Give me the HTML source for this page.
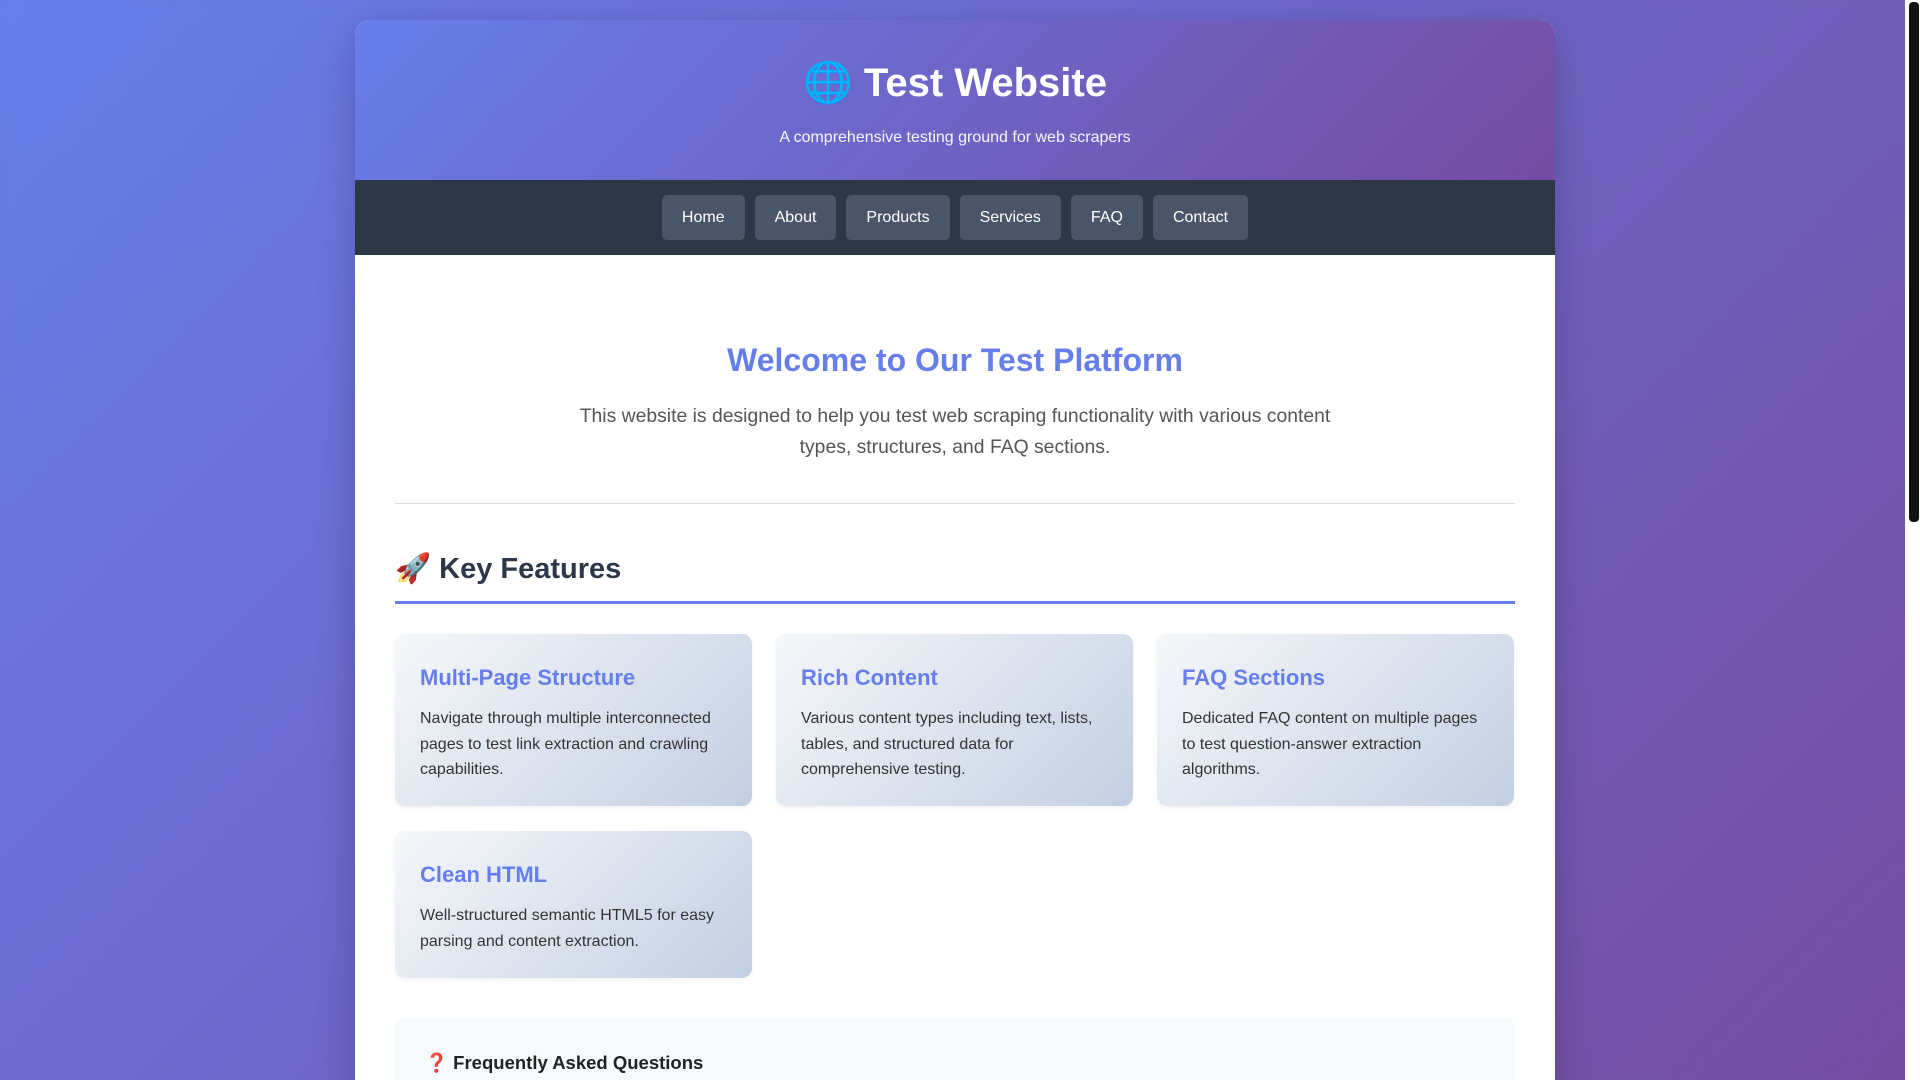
<!DOCTYPE html>
<html><head><meta charset="utf-8"><style>
*{box-sizing:border-box;margin:0;padding:0}
html,body{width:1920px;height:1080px;overflow:hidden}
body{font-family:"Liberation Sans","Noto Sans CJK SC",sans-serif;background:linear-gradient(135deg,#667eea 0%,#764ba2 100%);color:#333;position:relative}
.sb{position:absolute;right:0;top:0;width:15px;height:1080px;background:#fff}
.sb div{position:absolute;left:4px;right:1px;top:2px;height:520px;background:#111;border-radius:4px}
.wrap{position:absolute;left:355px;top:20px;width:1200px;height:1100px;background:#fff;border-radius:15px 15px 0 0;overflow:hidden;box-shadow:0 10px 40px rgba(0,0,0,.2)}
header{height:160px;background:linear-gradient(135deg,#667eea 0%,#764ba2 100%);color:#fff;text-align:center;padding-top:39px}
header h1{font-size:40px;font-weight:bold;line-height:48px}
header p{font-size:16px;margin-top:22px;opacity:.95}
nav{height:75px;background:#2d3748;display:flex;justify-content:center;gap:10px;padding-top:15px}
nav a{display:block;height:45px;line-height:45px;padding:0 20px;background:#4a5568;color:#fff;font-size:16px;border-radius:5px;text-decoration:none}
main{padding:0 40px}
.hero{text-align:center;padding-top:85px}
.hero h2{color:#667eea;font-size:32px;line-height:40px}
.hero p{font-size:19.35px;color:#555;line-height:31px;width:780px;margin:21px auto 0}
hr{border:0;border-top:1px solid #ddd;margin-top:40px}
h3.kf{font-size:29px;color:#2d3748;margin-top:46px;padding-bottom:13px;border-bottom:3px solid #667eea;line-height:38px}
.grid{display:grid;grid-template-columns:repeat(3,357px);grid-template-rows:172px 147px;gap:25px 24px;margin-top:30px}
.card{background:linear-gradient(135deg,#f5f7fa 0%,#c3cfe2 100%);border-radius:10px;padding:30px 25px 0;box-shadow:0 2px 6px rgba(0,0,0,.05);overflow:hidden}
.card h4{color:#667eea;font-size:22px;line-height:28px}
.card p{font-size:16px;line-height:25.6px;color:#333;margin-top:14px}
.faq{margin-top:40px;background:#f7fafc;border-radius:10px;height:200px;padding:34px 30px}
.faq h3{font-size:18.5px;color:#222}
</style></head><body>
<div class="sb"><div></div></div>
<div class="wrap">
<header><h1>🌐 Test Website</h1><p>A comprehensive testing ground for web scrapers</p></header>
<nav><a>Home</a><a>About</a><a>Products</a><a>Services</a><a>FAQ</a><a>Contact</a></nav>
<main>
<div class="hero"><h2>Welcome to Our Test Platform</h2><p>This website is designed to help you test web scraping functionality with various content types, structures, and FAQ sections.</p></div>
<hr>
<h3 class="kf">🚀 Key Features</h3>
<div class="grid">
<div class="card"><h4>Multi-Page Structure</h4><p>Navigate through multiple interconnected pages to test link extraction and crawling capabilities.</p></div>
<div class="card"><h4>Rich Content</h4><p>Various content types including text, lists, tables, and structured data for comprehensive testing.</p></div>
<div class="card"><h4>FAQ Sections</h4><p>Dedicated FAQ content on multiple pages to test question-answer extraction algorithms.</p></div>
<div class="card"><h4>Clean HTML</h4><p>Well-structured semantic HTML5 for easy parsing and content extraction.</p></div>
</div>
<div class="faq"><h3>❓ Frequently Asked Questions</h3></div>
</main>
</div>
</body></html>
